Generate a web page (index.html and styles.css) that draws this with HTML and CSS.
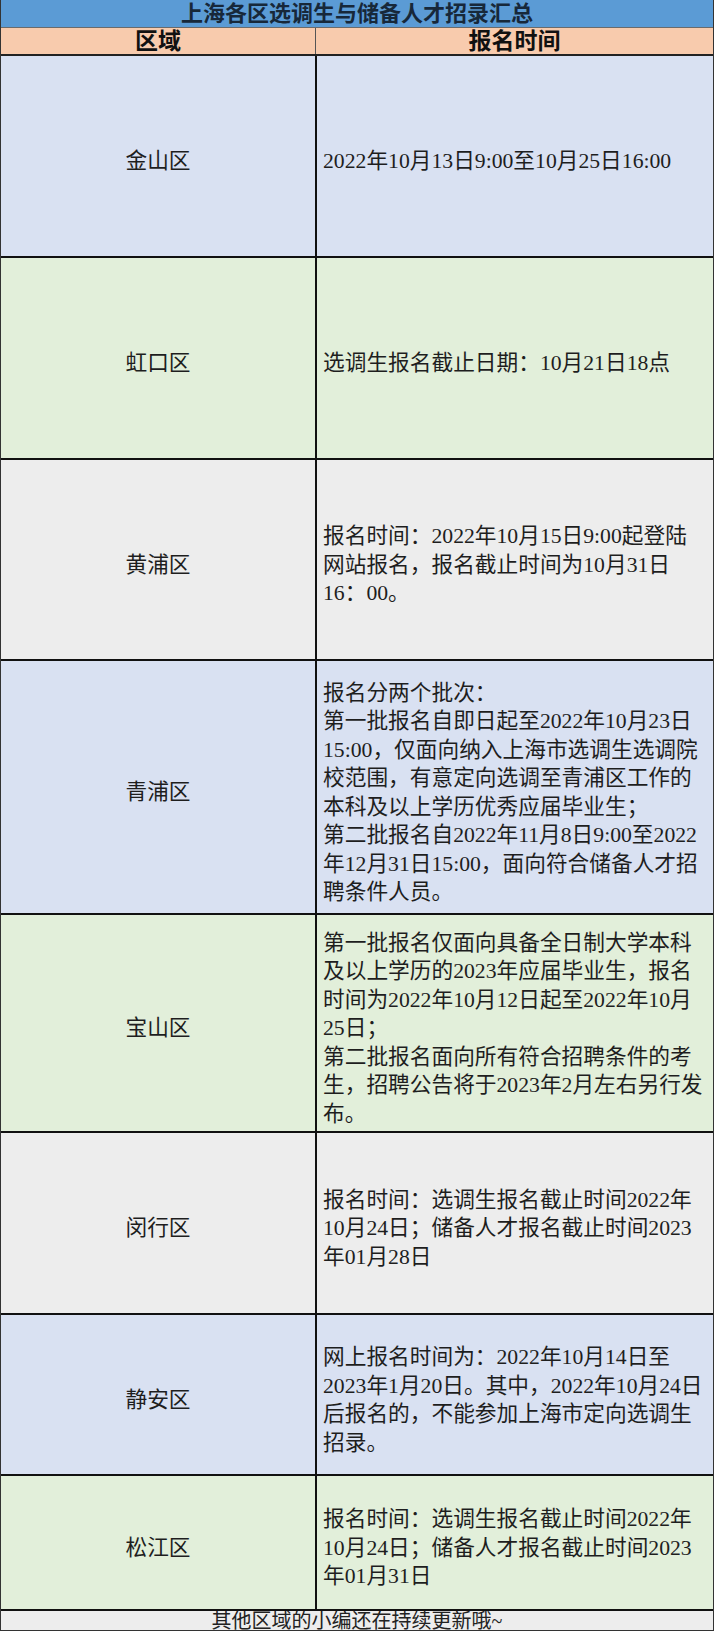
FILE: index.html
```html
<!DOCTYPE html>
<html lang="zh-CN">
<head>
<meta charset="utf-8">
<title>上海各区选调生与储备人才招录汇总</title>
<link rel="stylesheet" href="styles.css">
</head>
<body>
<div class="sheet">
  <div class="title">上海各区选调生与储备人才招录汇总</div>
  <div class="row head">
    <div class="cell left">区域</div>
    <div class="cell right">报名时间</div>
  </div>
  <div class="row blue h202">
    <div class="cell left">金山区</div>
    <div class="cell right">2022年10月13日9:00至10月25日16:00</div>
  </div>
  <div class="row green h202">
    <div class="cell left">虹口区</div>
    <div class="cell right">选调生报名截止日期：10月21日18点</div>
  </div>
  <div class="row gray h201">
    <div class="cell left">黄浦区</div>
    <div class="cell right">报名时间：2022年10月15日9:00起登陆<br>网站报名，报名截止时间为10月31日<br>16：00。</div>
  </div>
  <div class="row blue h254">
    <div class="cell left">青浦区</div>
    <div class="cell right">报名分两个批次：<br>第一批报名自即日起至2022年10月23日<br>15:00，仅面向纳入上海市选调生选调院<br>校范围，有意定向选调至青浦区工作的<br>本科及以上学历优秀应届毕业生；<br>第二批报名自2022年11月8日9:00至2022<br>年12月31日15:00，面向符合储备人才招<br>聘条件人员。</div>
  </div>
  <div class="row green h218">
    <div class="cell left">宝山区</div>
    <div class="cell right">第一批报名仅面向具备全日制大学本科<br>及以上学历的2023年应届毕业生，报名<br>时间为2022年10月12日起至2022年10月<br>25日；<br>第二批报名面向所有符合招聘条件的考<br>生，招聘公告将于2023年2月左右另行发<br>布。</div>
  </div>
  <div class="row gray h182">
    <div class="cell left">闵行区</div>
    <div class="cell right">报名时间：选调生报名截止时间2022年<br>10月24日；储备人才报名截止时间2023<br>年01月28日</div>
  </div>
  <div class="row blue h161">
    <div class="cell left">静安区</div>
    <div class="cell right">网上报名时间为：2022年10月14日至<br>2023年1月20日。其中，2022年10月24日<br>后报名的，不能参加上海市定向选调生<br>招录。</div>
  </div>
  <div class="row green h135">
    <div class="cell left">松江区</div>
    <div class="cell right">报名时间：选调生报名截止时间2022年<br>10月24日；储备人才报名截止时间2023<br>年01月31日</div>
  </div>
  <div class="footer">其他区域的小编还在持续更新哦~</div>
</div>
</body>
</html>
```
FILE: styles.css
```css
* { box-sizing: border-box; }
html, body { margin: 0; padding: 0; background: #ffffff; }
.sheet {
  width: 714px;
  font-family: "Liberation Serif", "Noto Sans CJK SC", serif;
  color: #1e1e1e;
  border-left: 1px solid #333;
  border-right: 1px solid #333;
}
.title {
  height: 28px;
  line-height: 28px;
  background: #5b9bd5;
  color: #17283a;
  text-align: center;
  font-family: "Liberation Sans", "Noto Sans CJK SC", sans-serif;
  font-weight: 700;
  font-size: 22px;
  border-bottom: 1px solid #6b6b6b;
  overflow: hidden;
}
.row {
  display: flex;
  border-bottom: 2px solid #111;
}
.cell {
  display: flex;
  align-items: center;
  font-size: 21.7px;
  line-height: 28.5px;
  padding-top: 11px;
}
.left {
  width: 316px;
  flex: none;
  justify-content: center;
  border-right: 2px solid #111;
}
.right {
  flex: 1;
  padding-left: 6px;
  white-space: nowrap;
}
.head {
  height: 28px;
  background: #f8cbad;
  border-bottom: 2px solid #222;
}
.head .cell {
  font-family: "Liberation Sans", "Noto Sans CJK SC", sans-serif;
  font-weight: 700;
  font-size: 23px;
  line-height: 26px;
  padding-top: 0;
  color: #111;
}
.head .left { border-right: 1px solid #555; width: 315px; }
.head .right { justify-content: center; padding-left: 0; }
.blue { background: #d9e1f2; }
.green { background: #e2efda; }
.gray { background: #ededed; }
.h202 { height: 202px; }
.h201 { height: 201px; }
.h254 { height: 254px; }
.h218 { height: 218px; }
.h182 { height: 182px; }
.h161 { height: 161px; }
.h135 { height: 135px; }
.footer {
  height: 20px;
  line-height: 20px;
  background: #ededed;
  text-align: center;
  font-size: 20px;
  color: #222;
  overflow: hidden;
  border-bottom: 1px solid #333;
}
```
